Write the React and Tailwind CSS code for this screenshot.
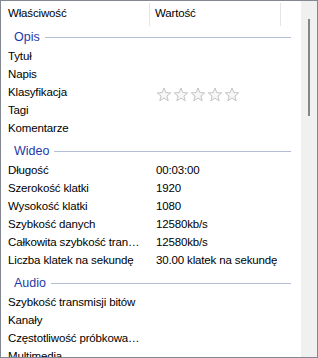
import React from 'react';

const groups = [
  {
    title: 'Opis',
    rows: [
      { name: 'Tytuł', value: '' },
      { name: 'Napis', value: '' },
      { name: 'Klasyfikacja', value: 'stars' },
      { name: 'Tagi', value: '' },
      { name: 'Komentarze', value: '' },
    ],
  },
  {
    title: 'Wideo',
    rows: [
      { name: 'Długość', value: '00:03:00' },
      { name: 'Szerokość klatki', value: '1920' },
      { name: 'Wysokość klatki', value: '1080' },
      { name: 'Szybkość danych', value: '12580kb/s' },
      { name: 'Całkowita szybkość transmisji bitów', value: '12580kb/s' },
      { name: 'Liczba klatek na sekundę', value: '30.00 klatek na sekundę' },
    ],
  },
  {
    title: 'Audio',
    rows: [
      { name: 'Szybkość transmisji bitów', value: '' },
      { name: 'Kanały', value: '' },
      { name: 'Częstotliwość próbkowania audio', value: '' },
      { name: 'Multimedia', value: '' },
    ],
  },
];

function Star() {
  return (
    <svg width="16" height="15" viewBox="0 0 16 15">
      <path
        d="M8 1 L9.8 5.6 L14.7 5.9 L10.9 9 L12.2 13.8 L8 11.1 L3.8 13.8 L5.1 9 L1.3 5.9 L6.2 5.6 Z"
        fill="#f7f7f7"
        stroke="#c4c4c4"
        strokeWidth="1"
        strokeLinejoin="round"
      />
    </svg>
  );
}

export default function App() {
  return (
    <div
      className="w-[318px] h-[358px] border border-[#828790] bg-white flex overflow-hidden text-[11.5px] tracking-[-0.15px] text-black"
      style={{ fontFamily: '"Liberation Sans", Arial, sans-serif' }}
    >
      <div className="flex-1 min-w-0 overflow-hidden">
        {/* naglowek */}
        <div className="flex h-[26px] items-center">
          <div className="w-[149px] h-[23px] flex items-center pl-[7px] border-r border-[#e5e5e5]">Właściwość</div>
          <div className="w-[131px] h-[23px] flex items-center pl-[5px] border-r border-[#e5e5e5]">Wartość</div>
        </div>

        {groups.map((g, i) => (
          <div key={g.title}>
            <div className={`flex items-center h-[21px] pl-[13px] pr-[10px] ${i > 0 ? 'mt-[3px]' : ''}`}>
              <span className="text-[12.5px] tracking-normal text-[#1e3aa8] mr-[5px]">{g.title}</span>
              <div className="flex-1 h-px bg-[#b4bdd6]" />
            </div>
            {g.rows.map((r) => (
              <div key={r.name} className="flex items-center h-[18px]">
                <div className="w-[149px] pl-[7px] pr-[8px] truncate">{r.name}</div>
                <div className="pl-[6px] truncate">
                  {r.value === 'stars' ? (
                    <div className="flex gap-[1px] pt-[2px]">
                      <Star />
                      <Star />
                      <Star />
                      <Star />
                      <Star />
                    </div>
                  ) : (
                    r.value
                  )}
                </div>
              </div>
            ))}
          </div>
        ))}
      </div>

      {/* pasek przewijania */}
      <div className="w-[16px] bg-[#f0f0f0] flex justify-center pt-[18px] shrink-0">
        <div className="w-[2px] h-[97px] bg-[#858585]" />
      </div>
    </div>
  );
}
